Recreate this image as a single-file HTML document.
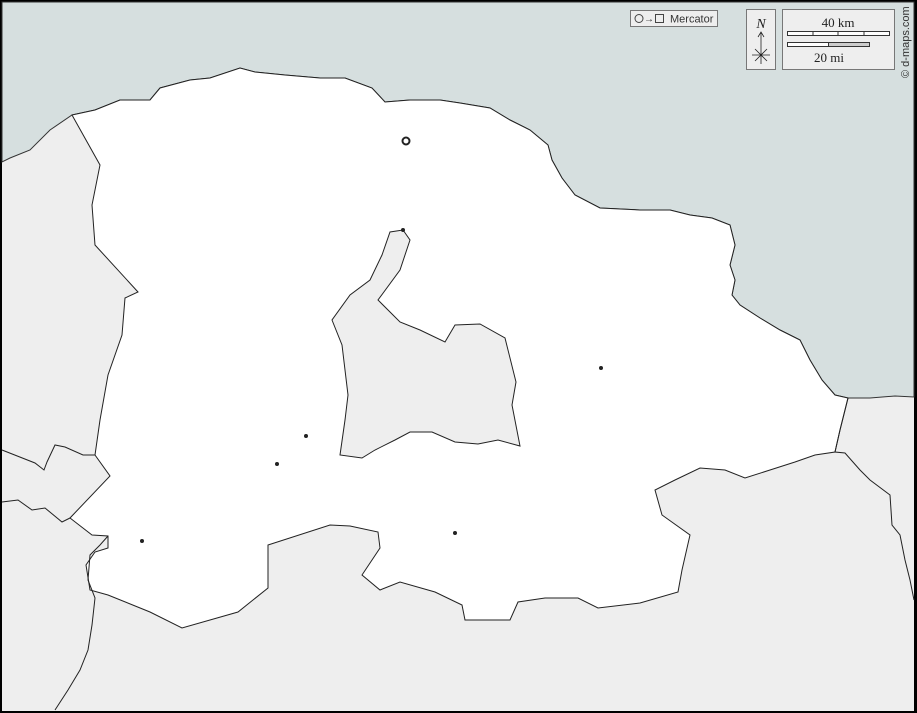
<!DOCTYPE html>
<html><head><style>
html,body{margin:0;padding:0;background:#000}
svg{display:block}
text{font-family:"Liberation Serif",serif}
</style></head><body>
<svg width="917" height="713" viewBox="0 0 917 713" xmlns="http://www.w3.org/2000/svg">
<rect x="0" y="0" width="917" height="713" fill="#000"/>
<rect x="2" y="2" width="912" height="709" fill="#eeeeee"/>
<!-- sea -->
<path d="M2,2 L914,2 L914,397 L895,396 L870,398 L848,398 L835,395 L822,380 L810,360 L800,340 L780,330 L760,318 L740,305 L732,295 L735,280 L730,265 L735,245 L730,225 L712,218 L690,215 L670,210 L640,210 L600,208 L575,195 L562,178 L552,160 L548,145 L530,130 L510,120 L490,108 L460,103 L440,100 L410,100 L385,102 L372,88 L345,78 L320,78 L285,75 L255,72 L240,68 L210,78 L190,80 L160,88 L150,100 L120,100 L95,110 L72,115 L50,130 L30,150 L10,158 L2,162 Z" fill="#d6dfdf" stroke="#333" stroke-width="1"/>
<!-- main white region -->
<path d="M72,115 L95,110 L120,100 L150,100 L160,88 L190,80 L210,78 L240,68 L255,72 L285,75 L320,78 L345,78 L372,88 L385,102 L410,100 L440,100 L460,103 L490,108 L510,120 L530,130 L548,145 L552,160 L562,178 L575,195 L600,208 L640,210 L670,210 L690,215 L712,218 L730,225 L735,245 L730,265 L735,280 L732,295 L740,305 L760,318 L780,330 L800,340 L810,360 L822,380 L835,395 L848,398 L840,430 L835,452 L815,455 L795,462 L770,470 L745,478 L725,470 L700,468 L675,480 L655,490 L662,515 L690,535 L682,570 L678,592 L640,603 L598,608 L578,598 L545,598 L518,602 L510,620 L465,620 L462,605 L435,592 L400,582 L380,590 L362,575 L380,548 L378,532 L350,526 L330,525 L268,545 L268,588 L238,612 L182,628 L150,612 L108,595 L90,590 L86,565 L95,552 L108,548 L108,536 L92,535 L70,518 L110,476 L95,455 L100,420 L108,375 L122,335 L125,298 L138,292 L95,245 L92,205 L100,165 Z" fill="#fff" stroke="#222" stroke-width="1"/>
<!-- inner hole -->
<path d="M340,455 L345,420 L348,395 L342,345 L332,320 L350,295 L370,280 L382,255 L390,232 L403,230 L410,240 L400,270 L378,300 L400,322 L420,330 L445,342 L455,325 L480,324 L505,338 L516,382 L512,405 L520,446 L498,440 L478,444 L455,442 L432,432 L410,432 L395,440 L375,450 L362,458 Z" fill="#eeeeee" stroke="#222" stroke-width="1"/>
<!-- other borders -->
<g fill="none" stroke="#222" stroke-width="1">
<path d="M2,450 L35,463 L44,470 L47,462 L55,445 L65,447 L83,455 L95,455"/>
<path d="M2,502 L18,500 L32,510 L45,508 L62,522 L70,518"/>
<path d="M108,536 L100,545 L90,555 L88,580 L95,598 L92,625 L88,650 L80,670 L68,690 L55,710"/>
<path d="M848,398 L840,430 L835,452 L845,453 L860,470 L870,480 L890,495 L892,525 L900,535 L905,560 L910,580 L914,600"/>
</g>
<!-- dots -->
<circle cx="406" cy="141" r="3.5" fill="none" stroke="#222" stroke-width="2"/>
<g fill="#222">
<circle cx="403" cy="230" r="2"/><circle cx="601" cy="368" r="2"/>
<circle cx="306" cy="436" r="2"/><circle cx="277" cy="464" r="2"/>
<circle cx="142" cy="541" r="2"/><circle cx="455" cy="533" r="2"/>
</g>
<!-- legend -->
<rect x="630.5" y="10.5" width="87" height="16" fill="#eee" stroke="#777"/>
<circle cx="639" cy="18.5" r="4" fill="none" stroke="#444"/>
<text x="644" y="22" font-size="10" font-family="Liberation Sans,sans-serif" fill="#333">→</text>
<rect x="655.5" y="14.5" width="8" height="8" fill="none" stroke="#444"/>
<text x="670" y="22.5" font-size="11" style="font-family:'Liberation Sans',sans-serif" fill="#333">Mercator</text>
<rect x="746.5" y="9.5" width="29" height="60" fill="#eee" stroke="#777"/>
<text x="761" y="28" font-size="14" font-style="italic" text-anchor="middle" fill="#222">N</text>
<path d="M761,32 V64 M758,37 L761,32 L764,37 M752,55 H770 M755,49 L767,61 M767,49 L755,61" stroke="#222" fill="none" stroke-width="0.8"/>
<rect x="782.5" y="9.5" width="112" height="60" fill="#eee" stroke="#777"/>
<text x="838" y="27" font-size="13" text-anchor="middle" fill="#222">40 km</text>
<rect x="787.5" y="31.5" width="102" height="4" fill="#fff" stroke="#333"/>
<path d="M813,31 V36 M838,31 V36 M864,31 V36" stroke="#333"/>
<rect x="787.5" y="42.5" width="82" height="4" fill="#ccc" stroke="#333"/>
<rect x="787.5" y="42.5" width="41" height="4" fill="#fff" stroke="#333"/>
<text x="829" y="62" font-size="13" text-anchor="middle" fill="#222">20 mi</text>
<text transform="translate(909,78) rotate(-90)" font-size="11" style="font-family:'Liberation Sans',sans-serif" fill="#333">© d-maps.com</text>
</svg>
</body></html>
